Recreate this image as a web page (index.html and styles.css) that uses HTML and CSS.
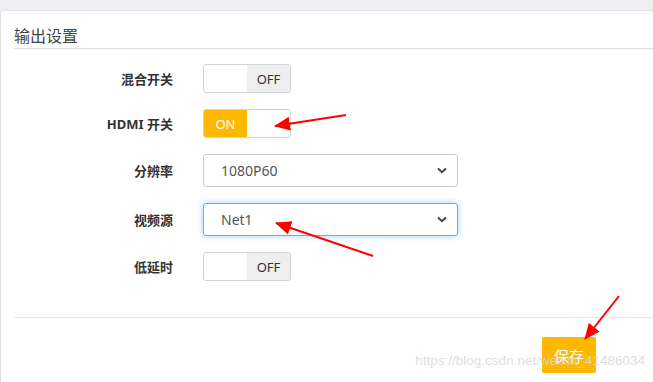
FILE: index.html
```html
<!DOCTYPE html>
<html lang="zh-CN">
<head>
    <meta charset="UTF-8">
    <title>输出设置</title>
    <link rel="stylesheet" href="styles.css">
</head>
<body>

<div class="page">
    <div class="panel">
        <div class="panel-title">输出设置</div>

        <div class="form">
            <div class="form-item">
                <label class="form-label">混合开关</label>
                <div class="switch">
                    <span class="switch-on"></span>
                    <span class="switch-off active">OFF</span>
                </div>
            </div>
            <div class="form-item">
                <label class="form-label">HDMI 开关</label>
                <div class="switch checked">
                    <span class="switch-on active">ON</span>
                    <span class="switch-off"></span>
                </div>
            </div>
            <div class="form-item">
                <label class="form-label">分辨率</label>
                <div class="select">
                    <span>1080P60</span>
                    <svg class="caret" width="10" height="7" viewBox="0 0 10 7"><path d="M1 1.5 L5 5.2 L9 1.5" fill="none" stroke="#444" stroke-width="2"/></svg>
                </div>
            </div>
            <div class="form-item">
                <label class="form-label">视频源</label>
                <div class="select focus">
                    <span>Net1</span>
                    <svg class="caret" width="10" height="7" viewBox="0 0 10 7"><path d="M1 1.5 L5 5.2 L9 1.5" fill="none" stroke="#444" stroke-width="2"/></svg>
                </div>
            </div>
            <div class="form-item">
                <label class="form-label">低延时</label>
                <div class="switch">
                    <span class="switch-on"></span>
                    <span class="switch-off active">OFF</span>
                </div>
            </div>
        </div>

        <div class="panel-footer">
            <button class="btn">保存</button>
        </div>
    </div>

    <!-- annotation arrows drawn over the screenshot -->
    <svg class="arrows" width="653" height="382" viewBox="0 0 653 382">
        <defs>
            <marker id="head" markerUnits="userSpaceOnUse" markerWidth="16" markerHeight="14" refX="15" refY="7" orient="auto">
                <path d="M0 0 L16 7 L0 14 Z" fill="#f00"/>
            </marker>
        </defs>
        <line x1="346" y1="115" x2="275" y2="126" stroke="#f00" stroke-width="2" marker-end="url(#head)"/>
        <line x1="373" y1="256" x2="276" y2="223" stroke="#f00" stroke-width="2" marker-end="url(#head)"/>
        <line x1="619" y1="296" x2="585" y2="339" stroke="#f00" stroke-width="2" marker-end="url(#head)"/>
    </svg>

    <div class="watermark">https://blog.csdn.net/weixin_41486034</div>
</div>

</body>
</html>
```

FILE: styles.css
```css
body {
    margin: 0;
    padding: 0;
    background-color: #eeeef3;
    font-family: "Noto Sans", "Noto Sans CJK SC", sans-serif;
    color: #333;
}
.page {
    position: relative;
    width: 653px;
    height: 382px;
    overflow: hidden;
    padding-top: 10px;
    box-sizing: border-box;
}
.panel {
    background-color: #fff;
    border: 1px solid #e2e2e2;
    border-right: 0;
    border-radius: 3px 0 0 0;
    height: 400px;
}
.panel-title {
    margin-left: 13px;
    height: 37px;
    line-height: 50px;
    font-size: 16px;
    color: #444;
    border-bottom: 1px solid #dedede;
}
.form {
    padding-top: 15px;
    padding-bottom: 20px;
    border-bottom: 1px solid #e8e8e8;
    margin-left: 13px;
}
.form-item {
    display: flex;
    align-items: center;
    margin-bottom: 16px;
}
.form-label {
    width: 159px;
    margin-right: 30px;
    text-align: right;
    font-size: 13px;
    font-weight: bold;
    color: #333;
}
.switch {
    display: flex;
    width: 86px;
    height: 27px;
    border: 1px solid #d2d2d2;
    border-radius: 3px;
    overflow: hidden;
    font-size: 13px;
}
.switch span {
    flex: 1;
    display: flex;
    align-items: center;
    justify-content: center;
}
.switch-off.active {
    background-color: #eee;
    color: #333;
}
.switch-on.active {
    background-color: #ffb800;
    color: #fff;
}
.select {
    display: flex;
    align-items: center;
    justify-content: space-between;
    width: 226px;
    height: 31px;
    padding: 0 10px 0 17px;
    border: 1px solid #ccc;
    border-radius: 3px;
    font-size: 14px;
    color: #555;
}
.select.focus {
    border-color: #66afe9;
    box-shadow: 0 0 6px rgba(102, 175, 233, 0.6);
}
.panel-footer {
    display: flex;
    justify-content: flex-end;
    padding: 19px 57px 0 0;
}
.btn {
    width: 54px;
    height: 36px;
    border: 0;
    border-radius: 2px;
    background-color: #ffb800;
    color: #fff;
    font-family: "Noto Sans CJK SC", sans-serif;
    font-size: 15px;
    padding: 0;
}
.arrows {
    position: absolute;
    left: 0;
    top: 0;
}
.watermark {
    position: absolute;
    z-index: 2;
    right: 8px;
    top: 353px;
    font-family: "Liberation Sans", Arial, sans-serif;
    font-size: 13.5px;
    color: rgba(215, 215, 215, 0.85);
    white-space: nowrap;
}
```
